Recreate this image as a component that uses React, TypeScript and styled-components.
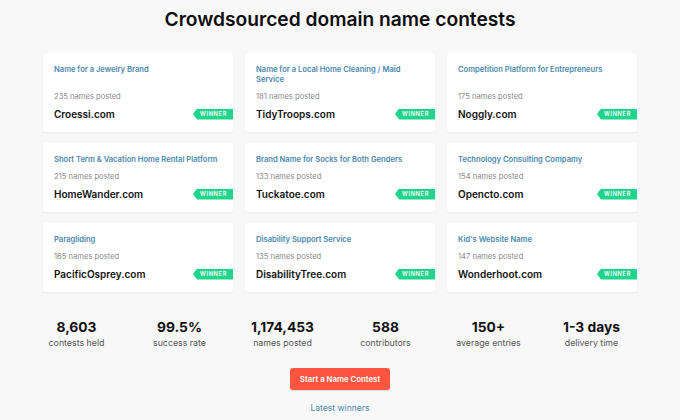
import React from "react";
import styled, { createGlobalStyle } from "styled-components";

const Global = createGlobalStyle`
  html, body { margin: 0; padding: 0; background: #f8f8f8; }
  body { font-family: Inter, "Noto Sans", sans-serif; color: #111; }
`;

const Page = styled.div`
  width: 680px;
  height: 420px;
  overflow: hidden;
  display: flex;
  flex-direction: column;
  align-items: center;
`;

const Title = styled.h1`
  margin: 5px 0 0;
  font-size: 19.2px;
  line-height: 28px;
  font-weight: 600;
  color: #0d0d0d;
`;

const Grid = styled.div`
  margin-top: 20px;
  display: grid;
  grid-template-columns: repeat(3, 190px);
  column-gap: 12px;
  row-gap: 11px;
`;

const Card = styled.div`
  background: #fff;
  border-radius: 3px;
  box-shadow: 0 1px 2px rgba(0, 0, 0, 0.05);
  padding: 12px 0 10px 11px;
  display: flex;
  flex-direction: column;
`;

const CardTitle = styled.div`
  font-size: 7.6px;
  line-height: 10px;
  font-weight: 600;
  color: #4a88ad;
  padding-right: 12px;
`;

const Posted = styled.div`
  margin-top: auto;
  padding-top: 7px;
  font-size: 7.6px;
  line-height: 10px;
  color: #8a8a8a;
`;

const DomainRow = styled.div`
  margin-top: 4px;
  display: flex;
  align-items: center;
  justify-content: space-between;
`;

const Domain = styled.div`
  font-size: 10px;
  line-height: 16px;
  font-weight: 600;
  color: #111;
`;

const Badge = styled.div`
  height: 11px;
  padding: 0 6px 0 7px;
  background: #1fd48b;
  color: #fff;
  font-size: 5.6px;
  font-weight: 600;
  letter-spacing: 0.7px;
  line-height: 11px;
  clip-path: polygon(4px 0, 100% 0, 100% 100%, 4px 100%, 0 50%);
`;

const Stats = styled.div`
  margin-top: 26px;
  width: 618px;
  padding-right: 12px;
  display: grid;
  grid-template-columns: repeat(6, 1fr);
`;

const Stat = styled.div`
  display: flex;
  flex-direction: column;
  align-items: center;
`;

const StatNum = styled.div`
  font-size: 13.8px;
  line-height: 18px;
  font-weight: 700;
  color: #111;
`;

const StatLabel = styled.div`
  font-size: 8.8px;
  line-height: 12px;
  color: #555;
  margin-top: 1px;
`;

const Button = styled.button`
  margin-top: 19px;
  width: 100px;
  height: 22px;
  border: none;
  border-radius: 3px;
  background: #ff5540;
  color: #fff;
  font-family: Inter, sans-serif;
  font-size: 7.8px;
  font-weight: 600;
  padding: 0;
  box-shadow: 0 1px 1px rgba(0, 0, 0, 0.1);
`;

const Latest = styled.a`
  margin-top: 12px;
  font-size: 8.6px;
  line-height: 12px;
  color: #4a88ad;
  text-decoration: none;
`;

const contests = [
  { t: "Name for a Jewelry Brand", n: 235, d: "Croessi.com" },
  { t: "Name for a Local Home Cleaning / Maid Service", n: 181, d: "TidyTroops.com" },
  { t: "Competition Platform for Entrepreneurs", n: 175, d: "Noggly.com" },
  { t: "Short Term & Vacation Home Rental Platform", n: 215, d: "HomeWander.com" },
  { t: "Brand Name for Socks for Both Genders", n: 133, d: "Tuckatoe.com" },
  { t: "Technology Consulting Compamy", n: 154, d: "Opencto.com" },
  { t: "Paragliding", n: 165, d: "PacificOsprey.com" },
  { t: "Disability Support Service", n: 135, d: "DisabilityTree.com" },
  { t: "Kid's Website Name", n: 147, d: "Wonderhoot.com" },
];

const stats = [
  ["8,603", "contests held"],
  ["99.5%", "success rate"],
  ["1,174,453", "names posted"],
  ["588", "contributors"],
  ["150+", "average entries"],
  ["1-3 days", "delivery time"],
];

export default function App() {
  return (
    <Page>
      <Global />
      <Title>Crowdsourced domain name contests</Title>
      <Grid>
        {contests.map((c) => (
          <Card key={c.d}>
            <CardTitle>{c.t}</CardTitle>
            <Posted>{c.n} names posted</Posted>
            <DomainRow>
              <Domain>{c.d}</Domain>
              <Badge>WINNER</Badge>
            </DomainRow>
          </Card>
        ))}
      </Grid>
      <Stats>
        {stats.map(([n, l]) => (
          <Stat key={l}>
            <StatNum>{n}</StatNum>
            <StatLabel>{l}</StatLabel>
          </Stat>
        ))}
      </Stats>
      <Button>Start a Name Contest</Button>
      <Latest href="#">Latest winners</Latest>
    </Page>
  );
}
